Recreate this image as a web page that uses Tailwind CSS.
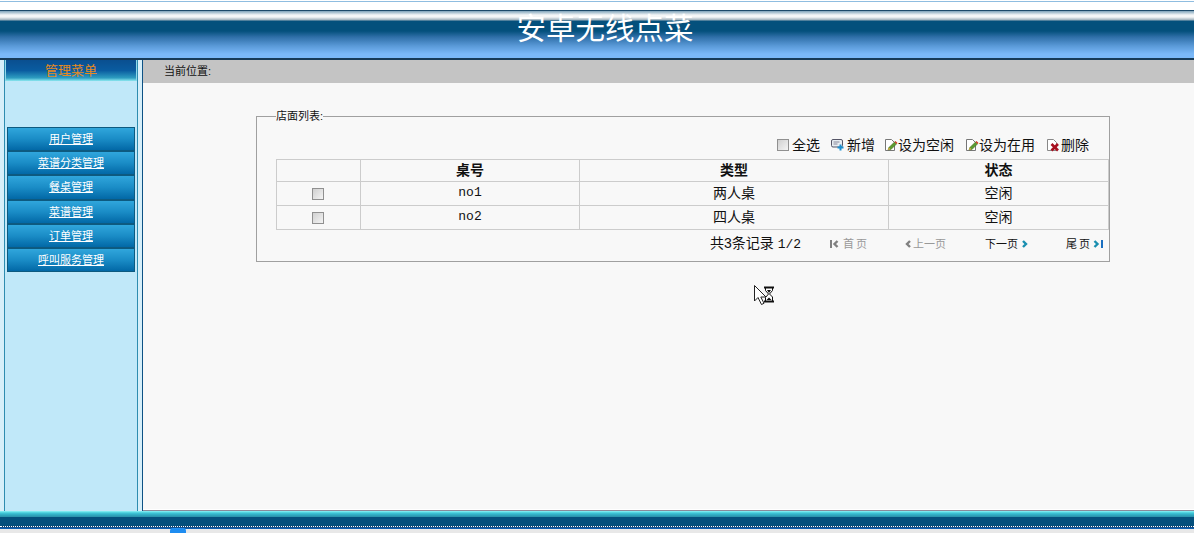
<!DOCTYPE html>
<html lang="zh-CN">
<head>
    <meta charset="UTF-8">
    <title>安卓无线点菜</title>
    <script src="https://cdn.jsdelivr.net/npm/@tailwindcss/browser@4"></script>
</head>
<body class="relative w-[1194px] h-[533px] overflow-hidden flex flex-col bg-white text-[#111] font-['Liberation_Sans','Noto_Sans_CJK_SC',sans-serif]">
    <!-- 顶部留白 -->
    <div class="h-[9px] mt-px border-t border-[#8fbde0] bg-white"></div>

    <!-- 标题栏 -->
    <header class="h-[50px] pl-4 text-center bg-[linear-gradient(#1d4a6a_0,#1d4a6a_1px,#7fa3ba_1px,#f4f6f7_5px,#f4f6f7_7px,#9fb0bb_10px,#04507c_11px,#04507c_21px,#2f6fa8_27px,#5a9ad8_36px,#7ab8f8_44px,#7ab8f8_48px,#163a58_48px,#163a58_50px)]">
        <h1 class="pt-[3px] text-[29.500px] leading-[32px] font-normal text-white">安卓无线点菜</h1>
    </header>

    <div class="flex h-[451px]">
        <!-- 左侧菜单 -->
        <aside class="w-[143px] pl-1 pr-[4px] bg-[#d6effa] border-r border-[#0d5285]">
            <div class="h-full border-x border-[#2d8cb0] bg-[#c0e8f9]">
                <div class="h-[21px] border-x border-[#8fd8ea] text-center text-[13px] leading-[21px] text-[#e88a20] bg-[linear-gradient(#0a4f90,#0a5ca0_50%,#2d9cc0_85%,#8ce8f0)]">管理菜单</div>
                <nav class="pt-[46px] px-[2px] flex flex-col">
                    <a href="#" class="h-[24.2px] border border-[#0d5a80] text-center text-[11px] leading-[22px] text-white underline bg-[linear-gradient(#30a6dc,#1a8cc6_50%,#0268a6)]">用户管理</a>
                    <a href="#" class="h-[24.2px] border border-[#0d5a80] text-center text-[11px] leading-[22px] text-white underline bg-[linear-gradient(#30a6dc,#1a8cc6_50%,#0268a6)]">菜谱分类管理</a>
                    <a href="#" class="h-[24.2px] border border-[#0d5a80] text-center text-[11px] leading-[22px] text-white underline bg-[linear-gradient(#30a6dc,#1a8cc6_50%,#0268a6)]">餐桌管理</a>
                    <a href="#" class="h-[24.2px] border border-[#0d5a80] text-center text-[11px] leading-[22px] text-white underline bg-[linear-gradient(#30a6dc,#1a8cc6_50%,#0268a6)]">菜谱管理</a>
                    <a href="#" class="h-[24.2px] border border-[#0d5a80] text-center text-[11px] leading-[22px] text-white underline bg-[linear-gradient(#30a6dc,#1a8cc6_50%,#0268a6)]">订单管理</a>
                    <a href="#" class="h-[24.2px] border border-[#0d5a80] text-center text-[11px] leading-[22px] text-white underline bg-[linear-gradient(#30a6dc,#1a8cc6_50%,#0268a6)]">呼叫服务管理</a>
                </nav>
            </div>
        </aside>

        <!-- 主内容 -->
        <main class="flex-1 bg-[#f8f8f8] border-b border-[#8a8a9a] shadow-[inset_0_-1px_0_#fff]">
            <div class="h-[23px] pl-[21px] bg-[#c4c4c4] text-[11px] leading-[22px]">当前位置:</div>

            <fieldset class="ml-[113px] mt-[26px] w-[853px] h-[153px] border border-[#a0a0a0] pl-[19px] pr-0">
                <legend class="text-[11px] leading-[14px] ml-0">店面列表:</legend>

                <!-- 工具栏 -->
                <div class="mt-[8px] h-[28px] pr-[20px] flex justify-end items-center text-[14px] leading-[20px]">
                    <span class="w-[12px] h-[12px] border border-[#909090] bg-[linear-gradient(135deg,#d0d0d0,#f4f4f4)] mr-[3px]"></span>
                    <span>全选</span>
                    <svg class="ml-[11px] mr-[2px]" width="14" height="14" viewBox="0 0 14 14">
                        <rect x="0.5" y="1.500" width="11" height="7.500" rx="1.500" fill="#e8edf2" stroke="#556"/>
                        <path d="M2.500 4h6M2.500 6h4" stroke="#889" stroke-width="1"/>
                        <path d="M8.500 6.500h2v2h2v2h-2v2h-2v-2h-2v-2h2z" fill="#1d8fd0"/>
                    </svg>
                    <span>新增</span>
                    <svg class="ml-[9px]" width="14" height="14" viewBox="0 0 14 14">
                        <path d="M1.500 1.500h6l3 3v8h-9z" fill="#fff" stroke="#777"/>
                        <path d="M4 12l.8-2.500L10.500 4l2 2-5.500 5.500z" fill="#5c9a30" stroke="#3e6a20" stroke-width=".5"/>
                        <path d="M10.500 4l1-1 2 2-1 1z" fill="#d03020"/>
                        <path d="M4 12l.8-2.500 1.700 1.700z" fill="#e8b040"/>
                    </svg>
                    <span>设为空闲</span>
                    <svg class="ml-[11px]" width="14" height="14" viewBox="0 0 14 14">
                        <path d="M1.500 1.500h6l3 3v8h-9z" fill="#fff" stroke="#777"/>
                        <path d="M4 12l.8-2.500L10.500 4l2 2-5.500 5.500z" fill="#5c9a30" stroke="#3e6a20" stroke-width=".5"/>
                        <path d="M10.500 4l1-1 2 2-1 1z" fill="#d03020"/>
                        <path d="M4 12l.8-2.500 1.700 1.700z" fill="#e8b040"/>
                    </svg>
                    <span>设为在用</span>
                    <svg class="ml-[11px] mr-px" width="14" height="14" viewBox="0 0 14 14">
                        <path d="M1.500 1.500h6l3 3v8h-9z" fill="#fff" stroke="#888"/>
                        <path d="M5.500 6l6.500 6.500M12 6l-6.500 6.500" stroke="#a81020" stroke-width="2.600"/>
                    </svg>
                    <span>删除</span>
                </div>

                <!-- 列表 -->
                <table class="w-[832px] table-fixed border-collapse text-[14px] leading-[18px] text-center">
                    <colgroup>
                        <col class="w-[84px]"><col class="w-[219px]"><col class="w-[309px]"><col class="w-[220px]">
                    </colgroup>
                    <thead>
                        <tr class="h-[22px]">
                            <th class="border border-[#cccccc]"></th>
                            <th class="border border-[#cccccc] font-bold pb-[2px]">桌号</th>
                            <th class="border border-[#cccccc] font-bold pb-[2px]">类型</th>
                            <th class="border border-[#cccccc] font-bold pb-[2px]">状态</th>
                        </tr>
                    </thead>
                    <tbody>
                        <tr class="h-[24px]">
                            <td class="border border-[#cccccc] pb-[2px] pr-[2px]"><span class="inline-block align-middle w-[12px] h-[12px] border border-[#909090] bg-[linear-gradient(135deg,#d0d0d0,#f4f4f4)]"></span></td>
                            <td class="border border-[#cccccc] pb-[1px] font-['Liberation_Mono',monospace] text-[13px]">no1</td>
                            <td class="border border-[#cccccc] pb-[2px]">两人桌</td>
                            <td class="border border-[#cccccc] pb-[2px]">空闲</td>
                        </tr>
                        <tr class="h-[24px]">
                            <td class="border border-[#cccccc] pb-[2px] pr-[2px]"><span class="inline-block align-middle w-[12px] h-[12px] border border-[#909090] bg-[linear-gradient(135deg,#d0d0d0,#f4f4f4)]"></span></td>
                            <td class="border border-[#cccccc] pb-[1px] font-['Liberation_Mono',monospace] text-[13px]">no2</td>
                            <td class="border border-[#cccccc] pb-[2px]">四人桌</td>
                            <td class="border border-[#cccccc] pb-[2px]">空闲</td>
                        </tr>
                    </tbody>
                </table>

                <!-- 分页 -->
                <div class="mt-[4px] h-[20px] flex items-center text-[11px] pl-[434px]">
                    <span class="w-[120px] text-[14px] whitespace-nowrap">共3条记录 <span class="font-['Liberation_Mono',monospace] text-[13px]">1/2</span></span>
                    <span class="w-[74px] flex items-center gap-[3px] text-[#999]">
                        <svg width="10" height="8" viewBox="0 0 10 8"><path d="M0 0h2v8H0z" fill="#808080"/><path d="M7.500 1L4.500 4l3 3" fill="none" stroke="#808080" stroke-width="2.400"/></svg>
                        <span class="tracking-[2px]">首页</span>
                    </span>
                    <span class="w-[81px] flex items-center gap-px text-[#999]">
                        <svg width="8" height="8" viewBox="0 0 8 8"><path d="M6 1L3 4l3 3" fill="none" stroke="#808080" stroke-width="2.400"/></svg>
                        <span>上一页</span>
                    </span>
                    <span class="w-[81px] flex items-center gap-[3px]">
                        <span>下一页</span>
                        <svg width="8" height="8" viewBox="0 0 8 8"><path d="M2 1l3 3-3 3" fill="none" stroke="#1a8fb0" stroke-width="2.400"/></svg>
                    </span>
                    <span class="flex items-center gap-px">
                        <span class="tracking-[2px]">尾页</span>
                        <svg width="10" height="8" viewBox="0 0 10 8"><path d="M1.500 1l3 3-3 3" fill="none" stroke="#1a8fb0" stroke-width="2.400"/><path d="M8 0h2v8H8z" fill="#1a6fc0"/></svg>
                    </span>
                </div>
            </fieldset>
        </main>
    </div>

    <!-- 底部状态栏 -->
    <footer class="flex-1 relative bg-[linear-gradient(#8ff4f8_0,#40c8d8_2px,#30a8c0_4px,#2a90a8_6px,#044f7c_6px,#044f7c_15px,#12406a_15px,#12406a_16px,#1060b0_17px,#1060b0_18px,#e8e8e8_18px,#e8e8e8_22px)]">
        <div class="absolute left-0 right-0 top-[15px] border-t border-dotted border-white"></div>
        <span class="absolute left-[170px] bottom-0 w-[16px] h-[5px] rounded-t-[3px] bg-[#1e8cf0]"></span>
    </footer>

    <!-- 等待光标 -->
    <svg class="absolute left-[754px] top-[285px]" width="22" height="21" viewBox="0 0 22 21">
        <path d="M.5.500v15.500l3.500-3.500 3.500 7 2.500-1.200-3.200-6.300h5.200z" fill="#fff" stroke="#222"/>
        <path d="M10 2.500h10M10 16.500h10" stroke="#111" stroke-width="1.800"/>
        <path d="M11.500 3v2.500l3 3.500-3 3.500V16h7v-4l-3-3 3-3.500V3z" fill="#fff" stroke="#111"/>
        <path d="M12.500 15l2.500-2.500 2.500 2.500zM13 5h4l-2 3z" fill="#111"/>
    </svg>
</body>
</html>
